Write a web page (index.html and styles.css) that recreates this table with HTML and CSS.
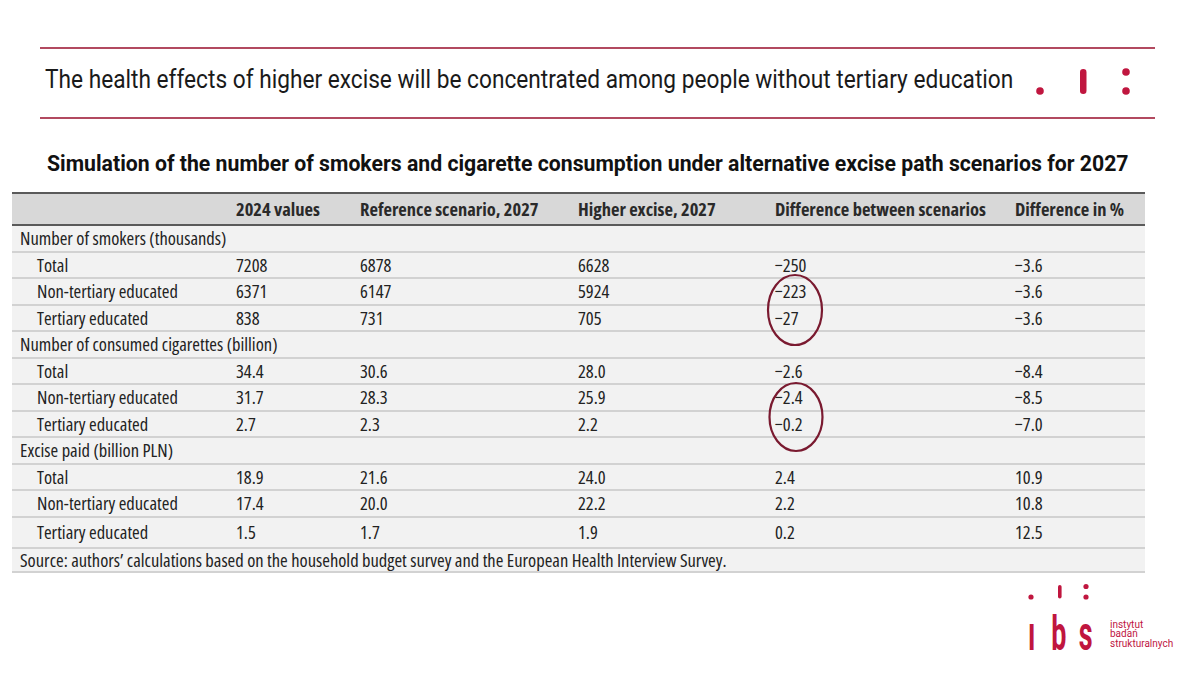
FILE: index.html
```html
<!DOCTYPE html>
<html>
<head>
<meta charset="utf-8">
<link rel="stylesheet" href="styles.css">
</head>
<body>
<div class="page">
  <header class="banner">
    <h1 class="banner-title">The health effects of higher excise will be concentrated among people without tertiary education</h1>
    <svg class="banner-mark" width="110" height="40" viewBox="0 0 110 40">
      <circle cx="10" cy="28" r="3.8" fill="#c0163f"/>
      <rect x="50" y="6" width="6.5" height="25" rx="3.2" fill="#c0163f"/>
      <circle cx="96" cy="9" r="3.8" fill="#c0163f"/>
      <circle cx="96" cy="28" r="3.8" fill="#c0163f"/>
    </svg>
  </header>

  <h2 class="subtitle">Simulation of the number of smokers and cigarette consumption under alternative excise path scenarios for 2027</h2>

  <div class="table-wrap">
    <table class="data">
      <colgroup>
        <col class="c1"><col class="c2"><col class="c3"><col class="c4"><col class="c5"><col class="c6">
      </colgroup>
      <thead>
        <tr><th></th><th>2024 values</th><th>Reference scenario, 2027</th><th>Higher excise, 2027</th><th>Difference between scenarios</th><th>Difference in %</th></tr>
      </thead>
      <tbody>
        <tr class="group"><td colspan="6">Number of smokers (thousands)</td></tr>
        <tr><td class="ind">Total</td><td>7208</td><td>6878</td><td>6628</td><td>−250</td><td>−3.6</td></tr>
        <tr><td class="ind">Non-tertiary educated</td><td>6371</td><td>6147</td><td>5924</td><td>−223</td><td>−3.6</td></tr>
        <tr><td class="ind">Tertiary educated</td><td>838</td><td>731</td><td>705</td><td>−27</td><td>−3.6</td></tr>
        <tr class="group"><td colspan="6">Number of consumed cigarettes (billion)</td></tr>
        <tr><td class="ind">Total</td><td>34.4</td><td>30.6</td><td>28.0</td><td>−2.6</td><td>−8.4</td></tr>
        <tr><td class="ind">Non-tertiary educated</td><td>31.7</td><td>28.3</td><td>25.9</td><td>−2.4</td><td>−8.5</td></tr>
        <tr><td class="ind">Tertiary educated</td><td>2.7</td><td>2.3</td><td>2.2</td><td>−0.2</td><td>−7.0</td></tr>
        <tr class="group"><td colspan="6">Excise paid (billion PLN)</td></tr>
        <tr><td class="ind">Total</td><td>18.9</td><td>21.6</td><td>24.0</td><td>2.4</td><td>10.9</td></tr>
        <tr><td class="ind">Non-tertiary educated</td><td>17.4</td><td>20.0</td><td>22.2</td><td>2.2</td><td>10.8</td></tr>
        <tr class="tall"><td class="ind">Tertiary educated</td><td>1.5</td><td>1.7</td><td>1.9</td><td>0.2</td><td>12.5</td></tr>
        <tr class="source"><td colspan="6">Source: authors’ calculations based on the household budget survey and the European Health Interview Survey.</td></tr>
      </tbody>
    </table>
    <svg class="ring ring-a" width="58" height="74" viewBox="0 0 58 74"><ellipse cx="29" cy="37" rx="27" ry="35" fill="none" stroke="#7a1a30" stroke-width="2.2"/></svg>
    <svg class="ring ring-b" width="58" height="72" viewBox="0 0 58 72"><ellipse cx="29" cy="36" rx="26.5" ry="34" fill="none" stroke="#7a1a30" stroke-width="2.2"/></svg>
  </div>

  <footer class="brand">
    <svg class="brand-dots" width="80" height="20" viewBox="0 0 80 20">
      <circle cx="13" cy="15" r="2.6" fill="#c0163f"/>
      <rect x="40" y="3" width="3.6" height="13.5" rx="1.8" fill="#c0163f"/>
      <circle cx="68" cy="4.5" r="2.6" fill="#c0163f"/>
      <circle cx="68" cy="15" r="2.6" fill="#c0163f"/>
    </svg>
    <div class="brand-row">
      <span class="brand-letter"><span class="glyph">ı</span></span>
      <span class="brand-letter"><span class="glyph">b</span></span>
      <span class="brand-letter"><span class="glyph">s</span></span>
      <span class="brand-name">instytut<br>badań<br>strukturalnych</span>
    </div>
  </footer>
</div>
</body>
</html>
```

FILE: styles.css
```css
html, body {
  margin: 0;
  padding: 0;
  background: #ffffff;
}

.page {
  width: 1200px;
  height: 674px;
  box-sizing: border-box;
  padding-top: 47px;
  position: relative;
  overflow: hidden;
  font-family: "Roboto", "Liberation Sans", sans-serif;
  color: #1a1a1a;
}

.banner {
  margin-left: 40px;
  width: 1115px;
  height: 68px;
  border-top: 2px solid #b24a60;
  border-bottom: 2px solid #b24a60;
  display: flex;
  align-items: center;
}

.banner-title {
  margin: 0 0 7px 5px;
  width: 985px;
  flex: 0 0 auto;
  font-weight: normal;
  font-size: 25px;
  line-height: 29px;
  color: #1a1a1a;
  white-space: nowrap;
  transform: scaleX(0.907);
  transform-origin: left center;
}

.banner-mark {
  display: block;
  flex: 0 0 auto;
}

.subtitle {
  margin: 32px 0 0 47px;
  font-size: 22px;
  font-weight: bold;
  color: #111;
  white-space: nowrap;
  line-height: 26px;
  transform: scaleX(0.965);
  transform-origin: left center;
}

.table-wrap {
  position: relative;
  margin: 15px 0 0 12px;
  width: 1133px;
}

.data {
  width: 1133px;
  border-collapse: collapse;
  table-layout: fixed;
  background: #f2f2f2;
  font-family: "Open Sans", "Roboto", sans-serif;
  font-stretch: 75%;
  font-size: 18.5px;
  line-height: 22px;
  color: #222;
}

.c1 { width: 216px; }
.c2 { width: 124px; }
.c3 { width: 218px; }
.c4 { width: 197px; }
.c5 { width: 240px; }
.c6 { width: 138px; }

.data thead th {
  background: #d8d8d8;
  border-top: 2px solid #5a5a5a;
  border-bottom: 2px solid #5a5a5a;
  height: 30px;
  padding: 0 0 0 8px;
  text-align: left;
  font-weight: 700;
  white-space: nowrap;
  color: #2a2a2a;
}

.data td {
  height: 24.5px;
  padding: 0 0 0 8px;
  border-top: 2px solid #d2d2d2;
  white-space: nowrap;
}

.data tbody tr:first-child td {
  border-top: none;
}

.data td.ind {
  padding-left: 25px;
}

.data tr.tall td {
  height: 29px;
}

.data tr.source td {
  height: 20px;
  border-bottom: 2px solid #d2d2d2;
}

.ring {
  position: absolute;
  display: block;
}

.ring-a {
  left: 754px;
  top: 81px;
}

.ring-b {
  left: 755px;
  top: 189px;
}

.brand {
  position: absolute;
  left: 1018px;
  top: 582px;
}

.brand-dots {
  display: block;
}

.brand-row {
  display: flex;
  align-items: flex-end;
  margin-top: 7px;
}

.brand-letter {
  display: block;
  width: 27px;
  text-align: center;
  font-family: "Roboto", sans-serif;
  font-weight: bold;
  font-size: 49px;
  line-height: 49px;
  color: #c0163f;
}

.brand-letter .glyph {
  display: inline-block;
  transform: scaleX(0.55);
}

.brand-name {
  margin: 0 0 10px 11px;
  font-family: "Roboto", sans-serif;
  font-size: 10px;
  line-height: 9.5px;
  color: #c0163f;
}
```
